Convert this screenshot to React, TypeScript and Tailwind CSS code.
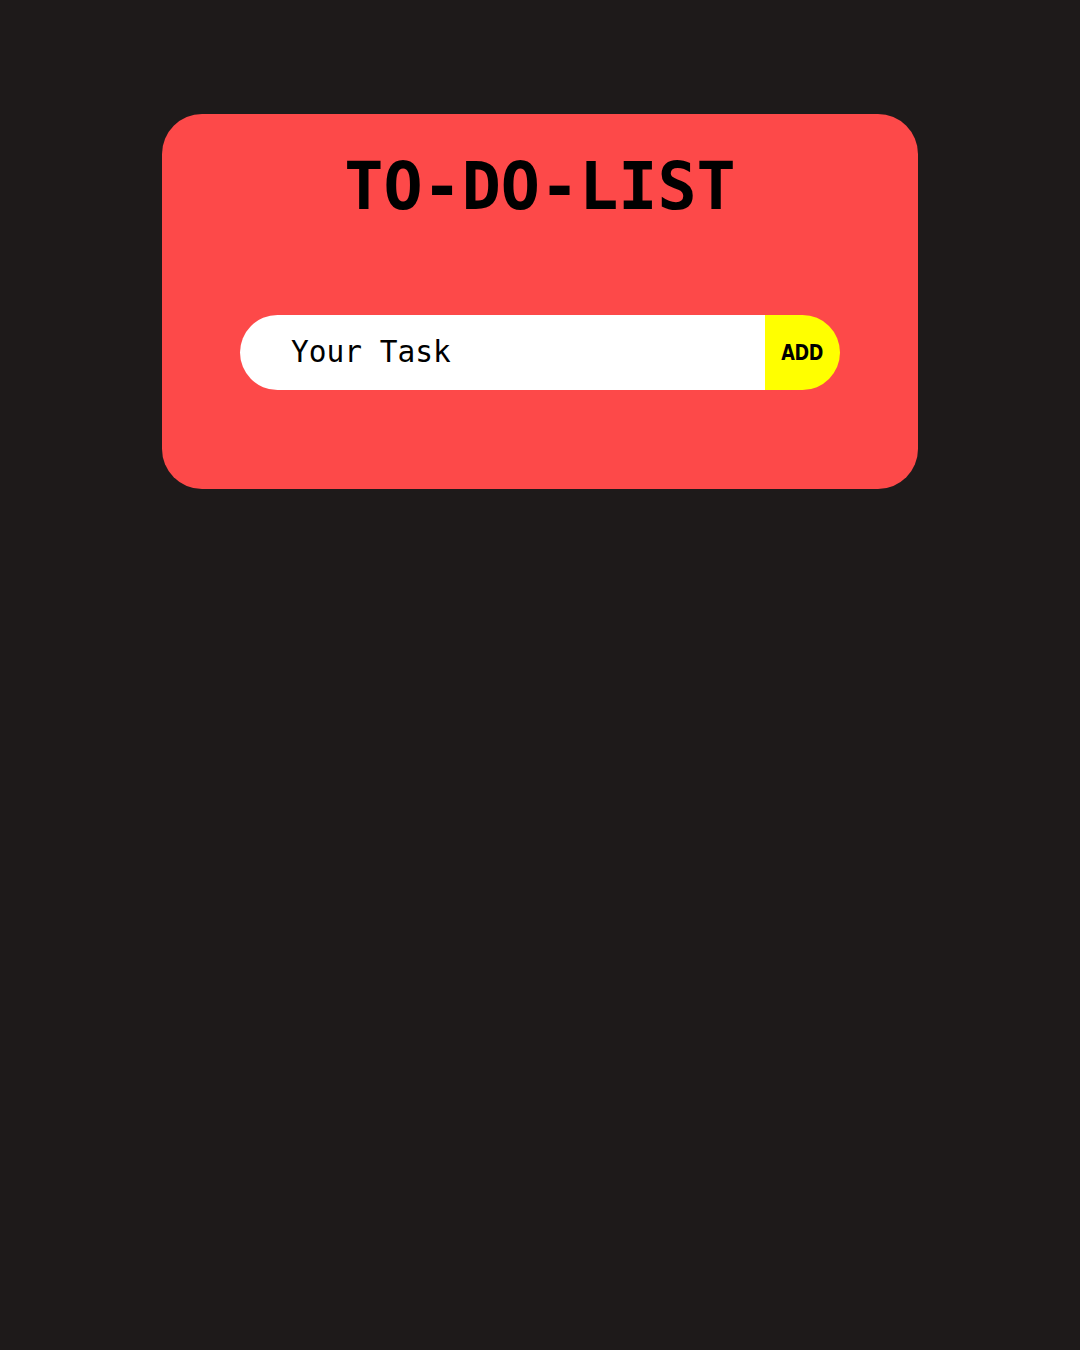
import React from "react";

export default function App() {
  return (
    <div className="min-h-[1350px] w-full bg-[#1e1a1a] pt-[114px]">
      <div className="mx-auto flex w-[756px] flex-col items-center rounded-[40px] bg-[#fd4949] pt-[35px] pb-[99px]">
        <h1
          className="text-[65px] font-bold leading-[75px] text-black"
          style={{ fontFamily: '"DejaVu Sans Mono", monospace' }}
        >
          TO-DO-LIST
        </h1>
        <div className="mt-[91px] flex h-[75px] w-[600px]">
          <div className="flex flex-1 items-center rounded-l-full bg-white pl-[51px]">
            <input
              type="text"
              placeholder="Your Task"
              className="w-full bg-transparent text-[29.5px] text-black outline-none placeholder:text-black"
              style={{ fontFamily: '"DejaVu Sans Mono", monospace' }}
            />
          </div>
          <button
            className="flex h-[75px] w-[75px] items-center justify-center rounded-r-full bg-[#ffff00] text-[22px] font-bold text-black"
            style={{ fontFamily: '"DejaVu Sans", sans-serif' }}
          >
            <span className="inline-block scale-x-[0.8] tracking-[-0.5px]">ADD</span>
          </button>
        </div>
      </div>
    </div>
  );
}
